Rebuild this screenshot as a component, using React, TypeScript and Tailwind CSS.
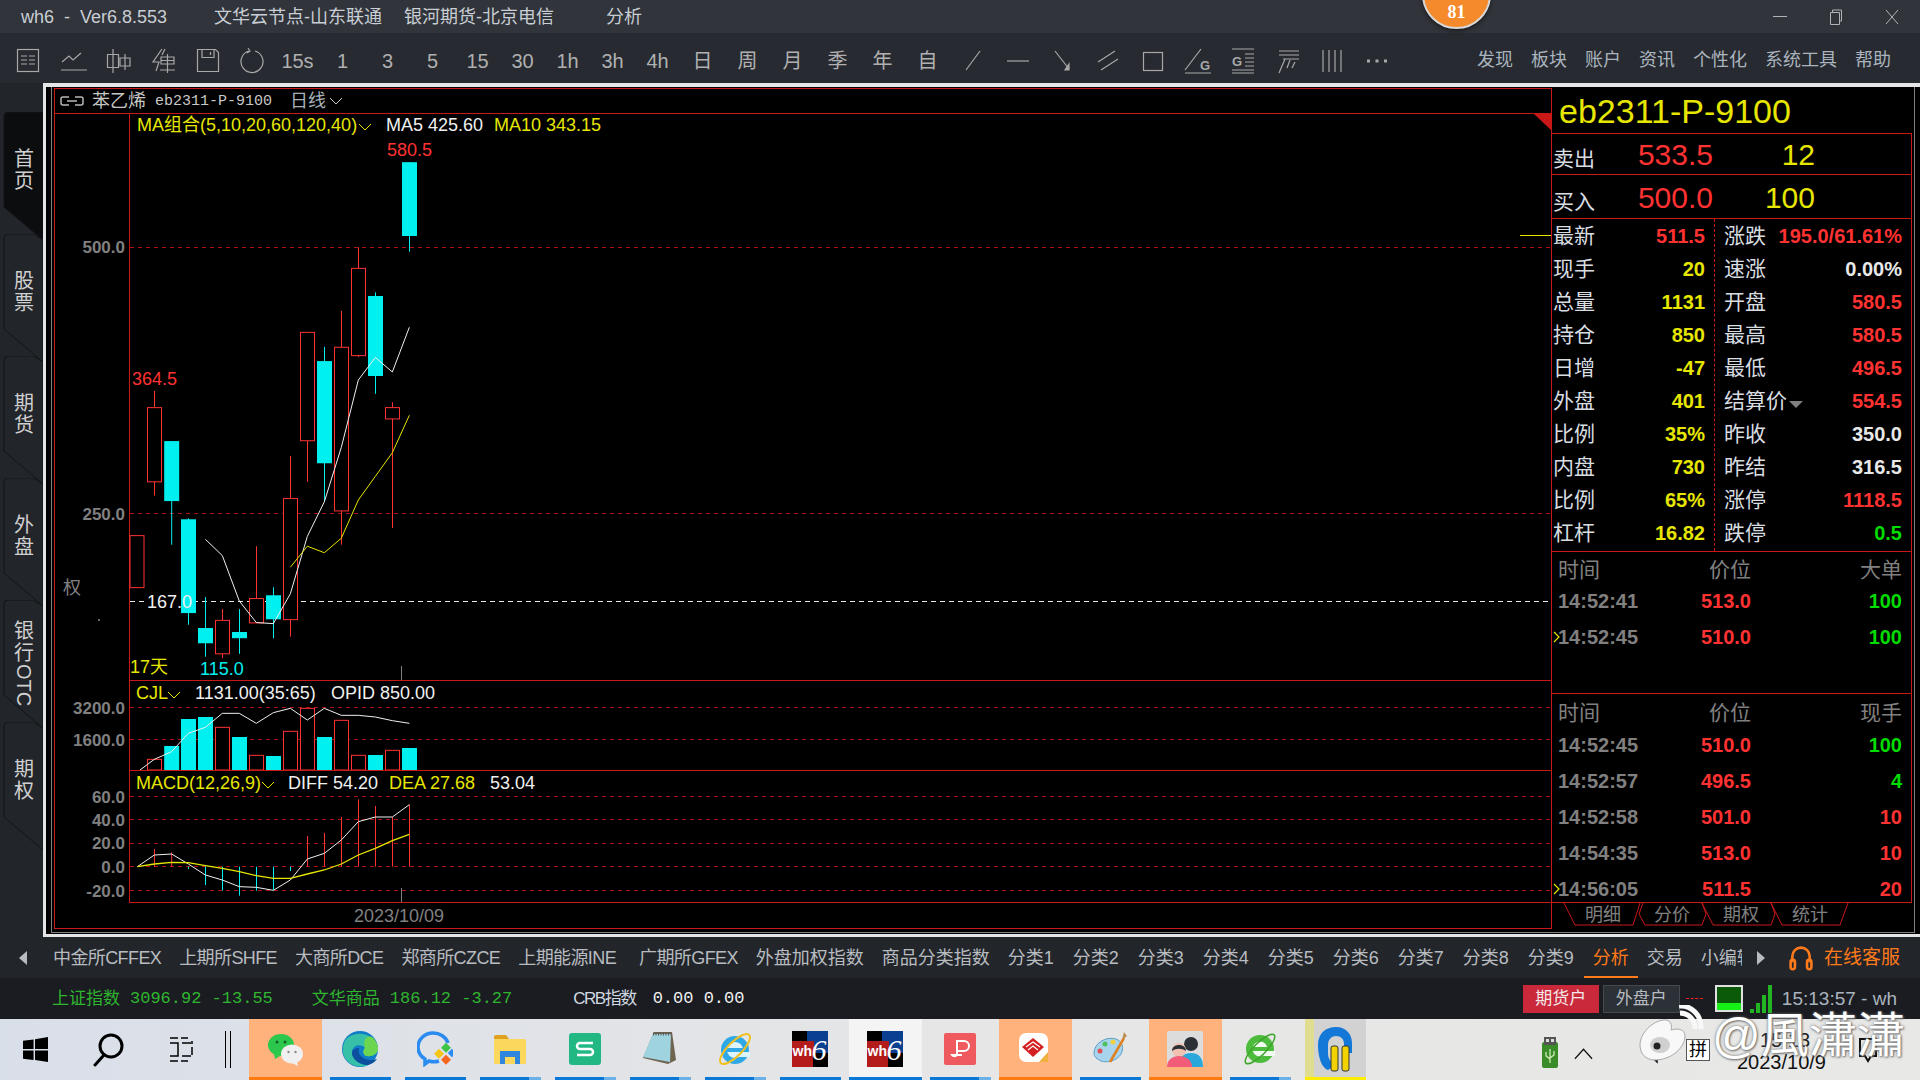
import type { ReactNode } from "react";

const SANS = "font-['Liberation_Sans','Noto_Sans_CJK_SC',sans-serif]";
const RED = "#c81818";
const GRID = "#a81414";
const UP = "#ff3232";
const CYAN = "#00f0f0";
const YEL = "#e6e600";
const GRAY = "#808080";

// candle x centres, read from the picture
const xs = [130 + 7, 154.5, 171.7, 188.5, 205.5, 222.5, 239.5, 256.5, 273.5, 290.5, 307.5, 324.5, 341.5, 358.5, 375.5, 392.5, 409.5];
const py = (z: number) => 120 + z / 2.75;
const ly = (z: number) => 670 + z / 3;

// [index, up?, bodyTop, bodyBottom, wickTop, wickBottom]
const candles: [number, boolean, number, number, number, number][] = [
  [0, true, 1143, 1286, 1143, 1286],
  [1, true, 791, 995, 745, 1033],
  [2, false, 883, 1048, 883, 1168],
  [3, false, 1098, 1356, 1095, 1388],
  [4, false, 1397, 1439, 1312, 1476],
  [5, true, 1376, 1468, 1345, 1480],
  [6, false, 1408, 1425, 1345, 1468],
  [7, true, 1316, 1383, 1172, 1383],
  [8, false, 1307, 1373, 1285, 1425],
  [9, true, 1041, 1374, 924, 1421],
  [10, true, 584, 882, 584, 995],
  [11, false, 663, 944, 624, 1050],
  [12, true, 625, 1075, 525, 1168],
  [13, true, 408, 648, 350, 652],
  [14, false, 484, 704, 474, 753],
  [15, true, 791, 822, 776, 1122],
  [16, false, 116, 319, 116, 362],
];

const ma5 = [[616, 1153], [667, 1198], [718, 1323], [769, 1382], [820, 1385], [871, 1303], [922, 1145], [973, 1050], [1024, 900], [1075, 715], [1126, 653], [1177, 693], [1228, 570]];
const ma10 = [[871, 1230], [922, 1172], [973, 1190], [1024, 1150], [1075, 1045], [1126, 980], [1177, 915], [1228, 812]];

// [index, up?, top]
const volumes: [number, boolean, number][] = [
  [1, true, 268], [2, false, 228], [3, false, 147], [4, false, 141], [5, true, 172], [6, false, 201], [7, true, 256], [8, false, 258],
  [9, true, 184], [10, true, 115], [11, false, 201], [12, true, 151], [13, true, 256], [14, false, 255], [15, true, 241], [16, false, 234],
];
const volLine = [[420, 300], [463, 268], [515, 245], [565, 190], [616, 172], [667, 130], [718, 130], [769, 160], [820, 128], [871, 115], [922, 150], [973, 115], [1024, 136], [1075, 136], [1126, 141], [1177, 152], [1228, 160]];

const macdBars: [number, boolean, number][] = [
  [1, true, 537], [2, true, 547], [3, false, 597], [4, false, 645], [5, false, 662], [6, false, 677], [7, false, 662], [8, false, 660],
  [9, false, 603], [10, true, 498], [11, true, 489], [12, true, 441], [13, true, 388], [14, true, 408], [15, true, 441], [16, true, 404],
];
const diffLine = [[412, 590], [463, 555], [515, 552], [565, 582], [616, 615], [667, 630], [718, 650], [769, 652], [820, 661], [871, 630], [922, 567], [973, 550], [1024, 510], [1075, 455], [1126, 441], [1177, 441], [1228, 404]];
const deaLine = [[412, 590], [463, 582], [515, 577], [565, 578], [616, 587], [667, 595], [718, 605], [769, 617], [820, 625], [871, 625], [922, 612], [973, 600], [1024, 582], [1075, 555], [1126, 535], [1177, 512], [1228, 493]];

const toPoints = (pts: number[][], fy: (z: number) => number) => pts.map(([x, y]) => `${x / 3},${fy(y)}`).join(" ");

function AxisLabel({ y, children }: { y: number; children: ReactNode }) {
  return <text x={125} y={y + 6} textAnchor="end" fontSize={17} fontWeight={700} fill={GRAY}>{children}</text>;
}

function Chevron({ x, y, color = YEL }: { x: number; y: number; color?: string }) {
  return <polyline points={`${x},${y} ${x + 6},${y + 6} ${x + 12},${y}`} fill="none" stroke={color} strokeWidth={1} />;
}

function PriceChart() {
  return (
    <svg viewBox="55 114 1496 566" className="block h-[566px] w-[1496px]">
      <line x1={129.5} y1={114} x2={129.5} y2={680} stroke={RED} />
      <line x1={130} y1={247.5} x2={1551} y2={247.5} stroke={GRID} strokeDasharray="4 4" />
      <line x1={130} y1={513.5} x2={1551} y2={513.5} stroke={GRID} strokeDasharray="4 4" />
      <line x1={130} y1={601.5} x2={1551} y2={601.5} stroke="#e8e8e8" strokeDasharray="5 4" />
      <line x1={1520} y1={235.5} x2={1551} y2={235.5} stroke={YEL} />
      <polygon points="1534,114 1551,114 1551,130" fill={RED} />
      <line x1={401.5} y1={666} x2={401.5} y2={680} stroke={GRAY} />

      {candles.map(([i, up, top, bottom, wt, wb]) => {
        const x = xs[i];
        const color = up ? UP : CYAN;
        return (
          <g key={i}>
            <line x1={x} y1={py(wt)} x2={x} y2={py(wb)} stroke={color} />
            {up ? (
              <rect x={x - 7} y={py(top)} width={14} height={py(bottom) - py(top)} fill="#000" stroke={color} />
            ) : (
              <rect x={x - 7.5} y={py(top)} width={15} height={py(bottom) - py(top)} fill={color} />
            )}
          </g>
        );
      })}
      <polyline points={toPoints(ma5, py)} fill="none" stroke="#f0f0f0" />
      <polyline points={toPoints(ma10, py)} fill="none" stroke={YEL} />

      <text x={137} y={131} fontSize={18} fill={YEL}>MA组合(5,10,20,60,120,40)</text>
      <Chevron x={359} y={124} />
      <text x={386} y={131} fontSize={18} fill="#f0f0f0">MA5 425.60</text>
      <text x={494} y={131} fontSize={18} fill={YEL}>MA10 343.15</text>

      <AxisLabel y={247}>500.0</AxisLabel>
      <AxisLabel y={514}>250.0</AxisLabel>
      <rect x={146} y={592} width={34} height={18} fill="#000" />
      <text x={147} y={608} fontSize={18} fill="#f0f0f0">167.0</text>
      <text x={132} y={385} fontSize={18} fill={UP}>364.5</text>
      <text x={387} y={156} fontSize={18} fill={UP}>580.5</text>
      <text x={130} y={673} fontSize={18} fill={YEL}>17天</text>
      <text x={200} y={675} fontSize={18} fill={CYAN}>115.0</text>
      <text x={63} y={594} fontSize={18} fill={GRAY}>权</text>
      <rect x={98} y={619} width={2} height={2} fill="#666" />
    </svg>
  );
}

function VolumeChart() {
  return (
    <svg viewBox="55 680 1496 90" className="block h-[90px] w-[1496px]">
      <line x1={129} y1={680.5} x2={1551} y2={680.5} stroke={RED} />
      <line x1={129.5} y1={680} x2={129.5} y2={770} stroke={RED} />
      <line x1={130} y1={707.5} x2={1551} y2={707.5} stroke={GRID} strokeDasharray="4 4" />
      <line x1={130} y1={739.5} x2={1551} y2={739.5} stroke={GRID} strokeDasharray="4 4" />
      {volumes.map(([i, up, top]) =>
        up ? (
          <rect key={i} x={xs[i] - 7} y={ly(top)} width={14} height={770 - ly(top)} fill="#000" stroke={UP} />
        ) : (
          <rect key={i} x={xs[i] - 7.5} y={ly(top)} width={15} height={770 - ly(top)} fill={CYAN} />
        ),
      )}
      <polyline points={toPoints(volLine, ly)} fill="none" stroke="#f0f0f0" />
      <text x={136} y={699} fontSize={18} fill={YEL}>CJL</text>
      <Chevron x={168} y={692} />
      <text x={195} y={699} fontSize={18} fill="#f0f0f0">1131.00(35:65)</text>
      <text x={331} y={699} fontSize={18} fill="#f0f0f0">OPID 850.00</text>
      <AxisLabel y={708}>3200.0</AxisLabel>
      <AxisLabel y={740}>1600.0</AxisLabel>
    </svg>
  );
}

function MacdChart() {
  return (
    <svg viewBox="55 770 1496 133" className="block h-[133px] w-[1496px]">
      <line x1={129} y1={770.5} x2={1551} y2={770.5} stroke={RED} />
      <line x1={129.5} y1={770} x2={129.5} y2={902} stroke={RED} />
      <line x1={129} y1={902.5} x2={1551} y2={902.5} stroke={RED} />
      {[796.5, 819.5, 843.5, 866.5, 890.5].map((y) => (
        <line key={y} x1={130} y1={y} x2={1551} y2={y} stroke={GRID} strokeDasharray="4 4" />
      ))}
      {macdBars.map(([i, up, top]) => (
        <line key={i} x1={xs[i]} y1={ly(590)} x2={xs[i]} y2={ly(top)} stroke={up ? UP : CYAN} />
      ))}
      <polyline points={toPoints(diffLine, ly)} fill="none" stroke="#f0f0f0" />
      <polyline points={toPoints(deaLine, ly)} fill="none" stroke={YEL} strokeWidth={1.3} />
      <line x1={401.5} y1={888} x2={401.5} y2={902} stroke={GRAY} />
      <text x={136} y={789} fontSize={18} fill={YEL}>MACD(12,26,9)</text>
      <Chevron x={262} y={782} />
      <text x={288} y={789} fontSize={18} fill="#f0f0f0">DIFF 54.20</text>
      <text x={389} y={789} fontSize={18} fill={YEL}>DEA 27.68</text>
      <text x={490} y={789} fontSize={18} fill="#f0f0f0">53.04</text>
      <AxisLabel y={797}>60.0</AxisLabel>
      <AxisLabel y={820}>40.0</AxisLabel>
      <AxisLabel y={843}>20.0</AxisLabel>
      <AxisLabel y={867}>0.0</AxisLabel>
      <AxisLabel y={891}>-20.0</AxisLabel>
    </svg>
  );
}

const stats = [
  ["最新", "511.5", "text-[#ff3232]", "涨跌", "195.0/61.61%", "text-[#ff3232]"],
  ["现手", "20", "text-[#e6e600]", "速涨", "0.00%", "text-[#e8e8e8]"],
  ["总量", "1131", "text-[#e6e600]", "开盘", "580.5", "text-[#ff3232]"],
  ["持仓", "850", "text-[#e6e600]", "最高", "580.5", "text-[#ff3232]"],
  ["日增", "-47", "text-[#e6e600]", "最低", "496.5", "text-[#ff3232]"],
  ["外盘", "401", "text-[#e6e600]", "结算价", "554.5", "text-[#ff3232]"],
  ["比例", "35%", "text-[#e6e600]", "昨收", "350.0", "text-[#e8e8e8]"],
  ["内盘", "730", "text-[#e6e600]", "昨结", "316.5", "text-[#e8e8e8]"],
  ["比例", "65%", "text-[#e6e600]", "涨停", "1118.5", "text-[#ff3232]"],
  ["杠杆", "16.82", "text-[#e6e600]", "跌停", "0.5", "text-[#00dc00]"],
];

function QuoteRow({ label, price, qty }: { label: string; price: string; qty: string }) {
  return (
    <div className="flex items-center pl-px pt-[2px]">
      <span className="w-[64px] pt-[7px] text-[21px] leading-none text-[#d8dde2]">{label}</span>
      <span className="w-[96px] text-right text-[30px] leading-none text-[#ff3232]">{price}</span>
      <span className="w-[102px] text-right text-[30px] leading-none text-[#e6e600]">{qty}</span>
    </div>
  );
}

function TickRow({ time, price, qty, qtyColor, mark }: { time: string; price: string; qty: string; qtyColor: string; mark?: boolean }) {
  return (
    <div className="relative flex h-[36px] shrink-0 items-center pl-[6px] pr-[9px] text-[20px] font-bold leading-none">
      {mark && (
        <svg viewBox="0 0 8 12" className="absolute left-px top-[12px] h-[12px] w-[8px]">
          <polyline points="1,1 6,6 1,11" fill="none" stroke="#e6e600" strokeWidth={1.2} />
        </svg>
      )}
      <span className="w-[130px] text-[#808080]">{time}</span>
      <span className="w-[63px] text-right text-[#ff3232]">{price}</span>
      <span className={`flex-1 text-right ${qtyColor}`}>{qty}</span>
    </div>
  );
}

function TickHead({ last, height }: { last: string; height: string }) {
  return (
    <div className={`flex shrink-0 items-center pl-[6px] pr-[9px] pt-[4px] text-[21px] leading-none text-[#808080] ${height}`}>
      <span className="w-[130px]">时间</span>
      <span className="w-[63px] whitespace-nowrap text-right">价位</span>
      <span className="flex-1 text-right">{last}</span>
    </div>
  );
}

function QuotePanel() {
  return (
    <div className="flex w-[360px] flex-col">
      <div className="flex h-[45px] shrink-0 items-center pl-[7px] pt-[1px] text-[34px] leading-none text-[#e6e600]">eb2311-P-9100</div>
      <div className="flex h-[770px] shrink-0 flex-col overflow-hidden border-y border-r border-[#c81818]">
        <div className="flex h-[41px] shrink-0 items-center border-b border-[#c81818]">
          <QuoteRow label="卖出" price="533.5" qty="12" />
        </div>
        <div className="flex h-[44px] shrink-0 items-center border-b border-[#c81818]">
          <QuoteRow label="买入" price="500.0" qty="100" />
        </div>
        <div className="flex h-[333px] shrink-0 border-b border-[#c81818]">
          <div className="w-[163px] border-r border-dashed border-[#c81818]">
            {stats.map((s, i) => (
              <div key={i} className="flex h-[33px] items-center justify-between pl-px pr-[9px]">
                <span className="text-[21px] leading-none text-[#d8dde2]">{s[0]}</span>
                <span className={`text-[20px] font-bold leading-none ${s[2]}`}>{s[1]}</span>
              </div>
            ))}
          </div>
          <div className="flex-1">
            {stats.map((s, i) => (
              <div key={i} className="flex h-[33px] items-center justify-between pl-[9px] pr-[9px]">
                <span className="relative text-[21px] leading-none text-[#d8dde2]">
                  {s[3]}
                  {s[3] === "结算价" && (
                    <span className="absolute -right-[16px] top-[11px] h-0 w-0 border-x-[7px] border-t-[7px] border-x-transparent border-t-[#808080]" />
                  )}
                </span>
                <span className={`text-[20px] font-bold leading-none ${s[5]}`}>{s[4]}</span>
              </div>
            ))}
          </div>
        </div>
        <div className="flex h-[142px] shrink-0 flex-col border-b border-[#c81818]">
          <TickHead last="大单" height="h-[31px]" />
          <TickRow time="14:52:41" price="513.0" qty="100" qtyColor="text-[#00dc00]" />
          <TickRow time="14:52:45" price="510.0" qty="100" qtyColor="text-[#00dc00]" mark />
        </div>
        <div className="flex flex-1 flex-col">
          <TickHead last="现手" height="h-[33px]" />
          <TickRow time="14:52:45" price="510.0" qty="100" qtyColor="text-[#00dc00]" />
          <TickRow time="14:52:57" price="496.5" qty="4" qtyColor="text-[#00dc00]" />
          <TickRow time="14:52:58" price="501.0" qty="10" qtyColor="text-[#ff3232]" />
          <TickRow time="14:54:35" price="513.0" qty="10" qtyColor="text-[#ff3232]" />
          <TickRow time="14:56:05" price="511.5" qty="20" qtyColor="text-[#ff3232]" mark />
        </div>
      </div>
      <svg viewBox="1552 903 360 25" className="block h-[25px] w-[360px]">
        <g fill="none" stroke="#c81818">
          <polyline points="1564,903 1575,925 1633,925 1640,903" />
          <polyline points="1643,903 1639,914 1645,925 1702,925 1706,914 1702,903" />
          <polyline points="1702,903 1713,925 1771,925 1775,914 1771,903" />
          <polyline points="1771,903 1782,925 1840,925 1848,903" />
        </g>
        <g fontSize={18} fill="#808080" textAnchor="middle">
          <text x={1603} y={921}>明细</text>
          <text x={1672} y={921}>分价</text>
          <text x={1741} y={921}>期权</text>
          <text x={1810} y={921}>统计</text>
        </g>
      </svg>
    </div>
  );
}

function ToolIcon({ children }: { children: ReactNode }) {
  return (
    <svg viewBox="0 0 30 30" className="h-[30px] w-[30px]" fill="none" stroke="#a8a8a8" strokeWidth={1.2}>
      {children}
    </svg>
  );
}

const tools: ReactNode[] = [
  <ToolIcon><rect x="4.5" y="3.5" width="21" height="22" /><path d="M8 10h6M16 10h6M8 14h6M16 14h6M8 18h6M16 18h6" /></ToolIcon>,
  <ToolIcon><path d="M4 16l7-6 4 4 8-7M3 24h26" /></ToolIcon>,
  <ToolIcon><path d="M10 3v24M4.5 8.5h11v13h-11zM22 8v16M17 12h10v8H17z" /></ToolIcon>,
  <ToolIcon><path d="M14 3L5 16h6l-3 9" /><path d="M17 3l-3 6M13 11h13v7H13zM19.500 8v19M12 24h15M13 14.500h13" /></ToolIcon>,
  <ToolIcon><path d="M4.500 3.500h18l3 3v19h-21zM9 3.500v8h12v-8M17.500 6v3" /></ToolIcon>,
  <ToolIcon><path d="M11 5a11 11 0 1 0 6 0M10 2l2 3-3 2" /></ToolIcon>,
  "15s", "1", "3", "5", "15", "30", "1h", "3h", "4h", "日", "周", "月", "季", "年", "自",
  <ToolIcon><path d="M8 24L22 5" /></ToolIcon>,
  <ToolIcon><path d="M4 15h22" /></ToolIcon>,
  <ToolIcon><path d="M7 5l14 18" /><path d="M21 18v6h-4z" fill="#a8a8a8" /></ToolIcon>,
  <ToolIcon><path d="M5 16L22 5M8 24L25 13" /></ToolIcon>,
  <ToolIcon><rect x="5.500" y="6.500" width="19" height="18" /></ToolIcon>,
  <ToolIcon>
    <path d="M2 24L18 3M2 27h26" />
    <text x="17" y="24" fontSize="13" fontWeight="700" fill="#a8a8a8" stroke="none">G</text>
  </ToolIcon>,
  <ToolIcon>
    <path d="M4 3h22M4 27h22M4 24h22M17 8h9M17 12h9M17 16h9M17 20h9" />
    <text x="4" y="20" fontSize="13" fontWeight="700" fill="#a8a8a8" stroke="none">G</text>
  </ToolIcon>,
  <ToolIcon><path d="M6 5h20M6 9h20M10 13h16M12 13l-6 14M17 14l-3 8M22 16l-3 6" /></ToolIcon>,
  <ToolIcon><path d="M5 4v22M11 4v22M17 4v22M23 4v22" /></ToolIcon>,
  <ToolIcon><path d="M4 15h3M12.500 15h3M21 15h3" strokeWidth={3} /></ToolIcon>,
];

const latinExchanges = ["中金所CFFEX", "上期所SHFE", "大商所DCE", "郑商所CZCE", "上期能源INE"];
const groups = ["分类1", "分类2", "分类3", "分类4", "分类5", "分类6", "分类7", "分类8", "分类9"];

function SideTab({ first, children }: { first?: boolean; children: ReactNode }) {
  return (
    <div className="relative h-[122px] shrink-0">
      <svg viewBox="0 0 43 130" className="absolute left-0 top-0 h-[130px] w-[43px]">
        <path d={first ? "M4 4Q4 0 8 0L43 0L43 128L4 95Z" : "M4 4Q4 0 8 0L33 0L43 6L43 128L4 95Z"} fill={first ? "#0c0d0f" : "#22252a"} stroke="#131518" />
      </svg>
      <div className="relative flex flex-col items-center pl-[5px] pt-[36px] text-[20px] leading-[22px] text-[#d0d0d0]">{children}</div>
    </div>
  );
}

function Cell({ kind = "plain", children }: { kind?: "plain" | "split" | "active" | "hot"; children: ReactNode }) {
  return (
    <div className={`relative flex h-full w-[75px] shrink-0 items-center justify-center pb-[2px] pr-[4px] ${kind === "hot" ? "bg-[#ffb27c] [clip-path:inset(0_2px_0_0)]" : ""} ${kind === "active" ? "bg-[#f4f4f4] [clip-path:inset(0_2px_0_0)]" : ""}`}>
      {children}
      {kind === "hot" && <div className="absolute bottom-0 left-0 h-[3px] w-full bg-[#ff7a10]" />}
      {kind === "active" && <div className="absolute bottom-0 left-0 h-[3px] w-full bg-[#0a78d7]" />}
      {(kind === "plain" || kind === "split") && (
        <div className="absolute bottom-0 left-[6px] flex h-[3px] w-[61px] bg-[#0a78d7]">
          {kind === "split" && <div className="ml-auto h-full w-[12px] bg-[#6cb0e8]" />}
        </div>
      )}
    </div>
  );
}

function App36({ children }: { children: ReactNode }) {
  return <svg viewBox="0 0 36 36" className="h-[36px] w-[36px]">{children}</svg>;
}

function Wh6() {
  return (
    <div className="relative h-[36px] w-[36px] bg-[#0b3f8f]">
      <div className="absolute bottom-0 left-0 h-[26px] w-[22px] bg-[#b41c1c]" />
      <div className="absolute left-0 top-0 h-[10px] w-[15px] bg-black" />
      <div className="absolute bottom-0 right-0 h-[14px] w-[15px] bg-black" />
      <span className="absolute left-[1px] top-[13px] text-[14px] font-bold leading-none text-white">wh</span>
      <span className="absolute right-[1px] top-[4px] font-['Liberation_Serif'] text-[30px] italic leading-none text-white">6</span>
    </div>
  );
}

function Taskbar() {
  return (
    <div className="relative flex h-[61px] shrink-0 items-center bg-gradient-to-r from-[#d9dfe9] via-[#e6e6e6] to-[#e8e8e6]">
      <svg viewBox="0 0 26 26" className="ml-[23px] h-[25px] w-[25px]" fill="#000">
        <path d="M0 4l11-1.500v10H0zM12.500 2.300L26 0v12.500H12.500zM0 14h11v10L0 22.500zM12.500 14H26v12l-13.500-2z" />
      </svg>
      <svg viewBox="0 0 34 34" className="ml-[43px] h-[34px] w-[34px]" fill="none" stroke="#000" strokeWidth={3}>
        <circle cx="20" cy="13" r="11" />
        <path d="M13 22L4 32" strokeLinecap="round" />
      </svg>
      <svg viewBox="0 0 26 26" className="ml-[43px] h-[26px] w-[26px]" fill="none" stroke="#000" strokeWidth={1.5}>
        <path d="M2 1h8M13 1h7M2 6h8v13H2M2 24h8M13 24h7M14 6h9M14 19h9M24 4v3M24 10v8" />
      </svg>
      <div className="ml-[31px] h-[37px] w-[6px] border-x border-black" />
      <div className="ml-[18px] flex h-full">
        <Cell kind="hot">
          <App36>
            <ellipse cx="14" cy="14" rx="13" ry="11" fill="#2cc84d" />
            <path d="M7 23l1 5 5-3z" fill="#2cc84d" />
            <circle cx="10" cy="11" r="1.500" fill="#14602a" />
            <circle cx="18" cy="11" r="1.500" fill="#14602a" />
            <ellipse cx="25" cy="23" rx="11" ry="9.500" fill="#f0f0f0" />
            <path d="M30 30l1 5-6-3z" fill="#f0f0f0" />
            <circle cx="21.500" cy="21" r="1.200" fill="#8a8a8a" />
            <circle cx="28.500" cy="21" r="1.200" fill="#8a8a8a" />
          </App36>
        </Cell>
        <Cell>
          <App36>
            <circle cx="18" cy="18" r="18" fill="#0f7dc8" />
            <path d="M2 12C6 0 30-2 36 16c1 7-6 10-11 9-5-1-4-6-2-8-3-4-12-4-13 4C9 26 16 34 26 34 12 40-4 28 2 12z" fill="#37c0a8" />
            <path d="M36 16c1 7-6 10-11 9-5-1-4-6-2-8C20 8 26 4 30 6c3 2 5 6 6 10z" fill="#6cd650" />
            <path d="M10 21C9 26 16 34 26 34c4-1 7-3 9-6-6 2-12 1-15-2-3-2-4-5-3-9-3 0-6 1-7 4z" fill="#0b4f9e" />
          </App36>
        </Cell>
        <Cell>
          <App36>
            <path d="M22 30c-3 1-7 1-10 0l-4 3v-5C3 25 1 21 1 16 1 8 8 2 16 2c7 0 13 4 15 10" fill="none" stroke="#2a8cf0" strokeWidth={3.500} />
            <rect x="26" y="13" width="7" height="7" fill="#3ec548" transform="rotate(45 29 16)" />
            <rect x="19" y="19" width="7" height="7" fill="#f5c518" transform="rotate(45 22 22)" />
            <rect x="32" y="19" width="6" height="6" fill="#2a8cf0" transform="rotate(45 35 22)" />
            <rect x="26" y="25" width="7" height="7" fill="#f4651f" transform="rotate(45 29 28)" />
          </App36>
        </Cell>
        <Cell kind="split">
          <App36>
            <path d="M2 6a2 2 0 0 1 2-2h10l3 4h-15z" fill="#e0a020" />
            <rect x="2" y="8" width="32" height="25" rx="1.500" fill="#fbd75b" />
            <path d="M8 20h20v13h-5v-7h-10v7H8z" fill="#2e86de" />
          </App36>
        </Cell>
        <Cell kind="split">
          <App36>
            <rect x="2" y="2" width="32" height="32" rx="3" fill="#22b884" />
            <path d="M26 12h-13a3 3 0 0 0 0 6h10a3 3 0 0 1 0 6H10" fill="none" stroke="#fff" strokeWidth={2.500} />
          </App36>
        </Cell>
        <Cell kind="split">
          <App36>
            <path d="M12 1h18l4 28-8 4L1 27z" fill="#6f6450" />
            <path d="M11 3h18l-1 28L1 26z" fill="#9fd3e0" />
            <path d="M11 3h18" stroke="#555" strokeWidth={3} strokeDasharray="1 1.500" />
          </App36>
        </Cell>
        <Cell kind="split">
          <App36>
            <circle cx="18" cy="19" r="14" fill="#2fa8e8" />
            <circle cx="18" cy="19" r="8" fill="#dff3fc" />
            <rect x="7" y="17" width="24" height="4" fill="#2fa8e8" />
            <rect x="22" y="21" width="11" height="5" fill="#dff3fc" />
            <ellipse cx="18" cy="18" rx="20" ry="7" transform="rotate(-45 18 18)" fill="none" stroke="#f2c021" strokeWidth={2} />
          </App36>
        </Cell>
        <Cell><Wh6 /></Cell>
        <Cell kind="active"><Wh6 /></Cell>
        <Cell kind="split">
          <App36>
            <rect x="2" y="2" width="32" height="32" rx="2" fill="#ee5a5e" />
            <path d="M15 10h7a5 5 0 0 1 0 10h-7zM15 10v14a3 3 0 0 1-5 0h10" fill="none" stroke="#fff" strokeWidth={2} />
          </App36>
        </Cell>
        <Cell kind="hot">
          <App36>
            <rect x="2" y="2" width="29" height="29" rx="7" fill="#fff" />
            <path d="M5 16l11-9 11 9-11 10z" fill="#d42020" />
            <path d="M9 16l7-5 7 5M11 19l5-4 5 4" fill="none" stroke="#fff" strokeWidth={1.200} />
            <path d="M22 31l9-10v10z" fill="#f0b040" />
          </App36>
        </Cell>
        <Cell>
          <App36>
            <path d="M2 22C2 12 14 5 24 8c7 3 8 9 5 15-4 7-14 9-20 7-4-2-7-4-7-8z" fill="#a8d4ee" stroke="#5aa0c8" />
            <circle cx="8" cy="20" r="2.500" fill="#e05050" />
            <circle cx="13" cy="13" r="2.500" fill="#50c060" />
            <circle cx="21" cy="11" r="2.500" fill="#f0d040" />
            <path d="M18 31L32 7" stroke="#e08020" strokeWidth={2.500} />
            <path d="M30 9l2-8 3 4z" fill="#b89050" />
          </App36>
        </Cell>
        <Cell kind="hot">
          <App36>
            <rect width="36" height="36" rx="2" fill="#dcdcdc" />
            <circle cx="24" cy="13" r="7" fill="#2b2f36" />
            <path d="M11 36c0-10 6-14 13-14s12 4 12 14z" fill="#2aa8dc" />
            <circle cx="12" cy="19" r="7" fill="#f0c0b0" />
            <path d="M5 20c0-8 14-8 14 0-4-3-10-3-14 0z" fill="#2b2f36" />
            <path d="M0 36c0-7 5-11 12-11s13 4 13 11z" fill="#f25c78" />
          </App36>
        </Cell>
        <Cell kind="split">
          <App36>
            <circle cx="18" cy="18" r="14" fill="#4dbb3c" />
            <circle cx="18" cy="18" r="7.500" fill="#f2fbf0" />
            <rect x="8" y="16" width="21" height="4" fill="#4dbb3c" />
            <rect x="22" y="20" width="11" height="5" fill="#f2fbf0" />
            <ellipse cx="18" cy="18" rx="20" ry="6" transform="rotate(-45 18 18)" fill="none" stroke="#3ea52c" strokeWidth={1.500} />
          </App36>
        </Cell>
        <div className="relative ml-[6px] flex h-full w-[61px] shrink-0 items-center bg-[#d2d2d2] pb-[2px] pl-[11px]">
          <div className="absolute left-0 top-0 h-full w-[9px] bg-[#e0dc90]" />
          <svg viewBox="0 0 38 48" className="relative h-[48px] w-[38px]">
            <path d="M2 20C2 8 10 2 20 2s16 7 16 16v10h-8v-9c0-5-3-8-8-8s-8 4-8 9v8c0 5 2 8 5 10-1 4-3 6-5 7C6 43 2 33 2 20z" fill="#1478d8" />
            <rect x="15" y="21" width="7" height="25" rx="2" fill="#f2d200" stroke="#333" />
            <rect x="26" y="21" width="7" height="25" rx="2" fill="#f2d200" stroke="#333" />
          </svg>
          <div className="absolute bottom-0 left-0 h-[3px] w-full bg-[#ffee00]" />
        </div>
      </div>

      <svg viewBox="0 0 18 32" className="absolute left-[1541px] top-[18px] h-[32px] w-[18px]">
        <rect x="1" y="5" width="16" height="26" rx="2" fill="#3a8c28" />
        <rect x="3" y="0" width="12" height="8" fill="#555" />
        <rect x="5" y="2" width="3" height="3" fill="#ddd" />
        <rect x="10" y="2" width="3" height="3" fill="#ddd" />
        <path d="M9 12v14M5 15v4l4 3M13 14v4l-4 3" fill="none" stroke="#d8f0c0" strokeWidth={1.200} />
      </svg>
      <svg viewBox="0 0 20 12" className="absolute left-[1574px] top-[29px] h-[12px] w-[19px]" fill="none" stroke="#111" strokeWidth={1.300}>
        <path d="M1 11L10 1l9 10" />
      </svg>
      {/* 喇叭图标，大部分被水印盖住 */}
      <svg viewBox="0 0 24 26" className="absolute left-[1642px] top-[20px] h-[26px] w-[24px]" fill="none" stroke="#111" strokeWidth={1.500}>
        <path d="M4 9h5l6-6v20l-6-6H4zM18 8a7 7 0 0 1 0 10" />
      </svg>
      <span className="absolute left-[1760px] top-[11px] text-[20px] leading-none text-[#222]">15:13</span>
      <span className="absolute left-[1737px] top-[33px] text-[20px] leading-none text-[#111]">2023/10/9</span>
      <span className="absolute left-[1686px] top-[20px] flex h-[22px] w-[24px] items-center justify-center border border-[#555] bg-white text-[18px] leading-none text-black">拼</span>
      {/* 通知图标 */}
      <svg viewBox="0 0 20 30" className="absolute left-[1858px] top-[17px] h-[30px] w-[20px]" fill="none" stroke="#111" strokeWidth={2}>
        <path d="M2 3h16v17h-5l-3 5-3-5H2z" />
      </svg>
    </div>
  );
}

function Watermark() {
  return (
    <div className="absolute left-[1636px] top-[1005px] flex items-center">
      <svg viewBox="0 0 68 62" className="h-[62px] w-[68px]">
        <path d="M4 40C4 26 20 14 30 15c6 1 6 7 5 10 7-2 14-1 14 6 0 12-14 24-30 24C9 55 4 48 4 40z" fill="#f8f8f8" stroke="#a8a8a8" strokeWidth={1} />
        <ellipse cx="24" cy="40" rx="10" ry="8" fill="#d0d0d0" />
        <circle cx="21" cy="41" r="3.500" fill="#222" />
        <path d="M44 8c8 0 15 6 15 16M43 1c12-1 23 9 22 23" fill="none" stroke="#f8f8f8" strokeWidth={5} />
      </svg>
      <span className="ml-[8px] text-[48px] leading-none text-white [text-shadow:0_0_3px_#6e6e6e,1px_1px_2px_#7a7a7a]">@風瀟瀟</span>
    </div>
  );
}

export default function App() {
  return (
    <div className={`relative flex h-[1080px] w-[1920px] flex-col overflow-hidden bg-[#22252a] ${SANS}`}>
      {/* 标题栏 */}
      <div className="relative flex h-[33px] shrink-0 items-center bg-[#31343a] pl-[21px] text-[18px] leading-none text-[#c8ced4]">
        <span className="w-[193px] whitespace-pre">wh6  -  Ver6.8.553</span>
        <span className="w-[190px]">文华云节点-山东联通</span>
        <span className="w-[202px]">银河期货-北京电信</span>
        <span>分析</span>
        <div className="absolute left-[1422px] top-[-40px] flex h-[69px] w-[69px] items-end justify-center rounded-full border-2 border-[#d8d8d8] bg-[#f58a2c] pb-[6px] font-['Liberation_Serif'] text-[18px] font-bold text-white shadow-[0_2px_4px_rgba(0,0,0,0.5)]">81</div>
        <div className="ml-auto flex items-center pr-[21px] text-[#b0b4b8]">
          <div className="h-px w-[14px] bg-[#b0b4b8]" />
          <svg viewBox="0 0 14 16" className="ml-[42px] h-[16px] w-[14px]" fill="none" stroke="#b0b4b8">
            <path d="M1.500 3.500h9v12h-9zM3.500 3V1h9v11h-2" />
          </svg>
          <svg viewBox="0 0 14 16" className="ml-[42px] h-[16px] w-[14px]" fill="none" stroke="#b0b4b8">
            <path d="M1 1l12 14M13 1L1 15" />
          </svg>
        </div>
      </div>

      {/* 工具栏 */}
      <div className="flex h-[50px] shrink-0 items-center bg-[#272a30] pl-[5px]">
        {tools.map((t, i) => (
          <div key={i} className="flex w-[45px] shrink-0 items-center justify-center pt-[5px] text-[20px] leading-none text-[#b0b0b0]">{t}</div>
        ))}
        <div className="ml-auto flex gap-[18px] pr-[29px] pt-[3px] text-[18px] leading-none text-[#aab4be]">
          <span>发现</span>
          <span>板块</span>
          <span>账户</span>
          <span>资讯</span>
          <span>个性化</span>
          <span>系统工具</span>
          <span>帮助</span>
        </div>
      </div>

      {/* 主体 */}
      <div className="flex h-[854px] shrink-0">
        <div className="flex w-[43px] shrink-0 flex-col overflow-hidden pt-[29px]">
          <SideTab first><span>首</span><span>页</span></SideTab>
          <SideTab><span>股</span><span>票</span></SideTab>
          <SideTab><span>期</span><span>货</span></SideTab>
          <SideTab><span>外</span><span>盘</span></SideTab>
          <SideTab>
            <span className="-mt-[16px]">银</span>
            <span>行</span>
            <span className="[writing-mode:vertical-rl]">OTC</span>
          </SideTab>
          <SideTab><span>期</span><span>权</span></SideTab>
        </div>
        <div className="flex-1 border-b-[3px] border-l-[3px] border-t-[4px] border-[#e6e6e6] bg-black pl-[5px] pr-[5px]">
          <div className="flex h-[846px] border-x border-b border-[#808080] pb-[3px] pl-[2px] pr-[2px] pt-px">
            <div className="flex h-[841px] w-[1498px] shrink-0 flex-col border border-[#c81818]">
              <div className="flex h-[25px] shrink-0 items-center border-b border-[#c81818] pl-[5px] text-[18px] leading-none text-[#c8c8c8]">
                <svg viewBox="0 0 24 10" className="h-[10px] w-[24px]" fill="none" stroke="#b8b8b8" strokeWidth={1.500}>
                  <path d="M9 1H3a2 2 0 0 0-2 2v4a2 2 0 0 0 2 2h6M15 1h6a2 2 0 0 1 2 2v4a2 2 0 0 1-2 2h-6M7 5h10" />
                </svg>
                <span className="ml-[8px]">苯乙烯</span>
                <span className="ml-[9px] font-['Liberation_Mono'] text-[15px]">eb2311-P-9100</span>
                <span className="ml-[18px] text-[#a8b0b8]">日线</span>
                <svg viewBox="0 0 14 8" className="ml-[3px] h-[8px] w-[14px]" fill="none" stroke="#c8c8c8">
                  <path d="M1 1l6 6 6-6" />
                </svg>
              </div>
              <PriceChart />
              <VolumeChart />
              <MacdChart />
              <div className="relative flex-1">
                <span className="absolute left-[299px] top-[4px] text-[18px] leading-none text-[#808080]">2023/10/09</span>
              </div>
            </div>
            <QuotePanel />
          </div>
        </div>
      </div>

      {/* 交易所页签 */}
      <div className="relative flex h-[41px] shrink-0 items-center bg-[#22252a] pl-[18px] text-[18px] leading-none text-[#b8bcc0]">
        <svg viewBox="0 0 10 14" className="mr-[25px] h-[14px] w-[10px]" fill="#b8bcc0">
          <path d="M9 0v14L1 7z" />
        </svg>
        <div className="flex gap-[18px] whitespace-nowrap">
          {latinExchanges.map((e) => (
            <span key={e} className="tracking-[-0.6px]">{e}</span>
          ))}
          <span className="ml-[5px] tracking-[-0.6px]">广期所GFEX</span>
          <span>外盘加权指数</span>
          <span>商品分类指数</span>
          {groups.map((e) => (
            <span key={e} className="w-[47px]">{e}</span>
          ))}
          <span className="relative text-[#ff7a1a]">
            分析
            <span className="absolute -bottom-[11px] -left-[9px] h-[2px] w-[54px] bg-[#ff7a1a]" />
          </span>
          <span>交易</span>
          <span className="w-[41px] overflow-hidden">小编辑</span>
        </div>
        <svg viewBox="0 0 10 14" className="ml-[14px] h-[14px] w-[10px]" fill="#b8bcc0">
          <path d="M1 0v14l8-7z" />
        </svg>
        <div className="ml-auto flex items-center gap-[9px] pr-[20px] text-[19px] text-[#ff7a1a]">
          <svg viewBox="0 0 28 30" className="h-[26px] w-[28px]" fill="none" stroke="#ff7a1a" strokeWidth={3}>
            <path d="M4 20v-7a10 10 0 0 1 20 0v7" />
            <rect x="2" y="17" width="5" height="11" rx="2.500" />
            <rect x="21" y="17" width="5" height="11" rx="2.500" />
          </svg>
          <span>在线客服</span>
        </div>
      </div>

      {/* 状态栏 */}
      <div className="flex h-[41px] shrink-0 items-center bg-[#1a1c21] pl-[52px] text-[17px] leading-none">
        <span className="text-[#2fb52f]">上证指数</span>
        <span className="ml-[10px] whitespace-pre font-['Liberation_Mono'] text-[#2fb52f]">3096.92 -13.55</span>
        <span className="ml-[39px] text-[#2fb52f]">文华商品</span>
        <span className="ml-[10px] whitespace-pre font-['Liberation_Mono'] text-[#2fb52f]">186.12 -3.27</span>
        <span className="ml-[61px] tracking-[-1.5px] text-[#d0d8e0]">CRB指数</span>
        <span className="ml-[17px] whitespace-pre font-['Liberation_Mono'] text-[#f0f0f0]">0.00 0.00</span>
        <div className="ml-auto flex items-center pr-[23px]">
          <span className="flex h-[28px] w-[76px] items-center justify-center bg-[#c9293b] text-[#f4e8e8]">期货户</span>
          <span className="ml-[4px] flex h-[28px] w-[77px] items-center justify-center border border-[#444a50] bg-[#2c3138] text-[#b8bcc0]">外盘户</span>
          <span className="ml-[6px] h-px w-[17px] border-t border-dashed border-[#ff2020]" />
          <div className="ml-[12px] flex h-[27px] w-[28px] flex-col justify-end border-2 border-[#e0e0e0] bg-[#0a5a0a]">
            <div className="h-[7px] bg-[#16f016]" />
          </div>
          <svg viewBox="0 0 23 28" className="ml-[7px] h-[28px] w-[23px]" fill="#22b422">
            <path d="M0 24h4v4H0zM6 18h4v10H6zM12 10h4v18h-4zM18 0h4v28h-4z" />
          </svg>
          <span className="ml-[9px] whitespace-pre text-[19px] text-[#aab4be]">15:13:57 - wh</span>
        </div>
      </div>

      <Taskbar />
      <Watermark />
    </div>
  );
}
